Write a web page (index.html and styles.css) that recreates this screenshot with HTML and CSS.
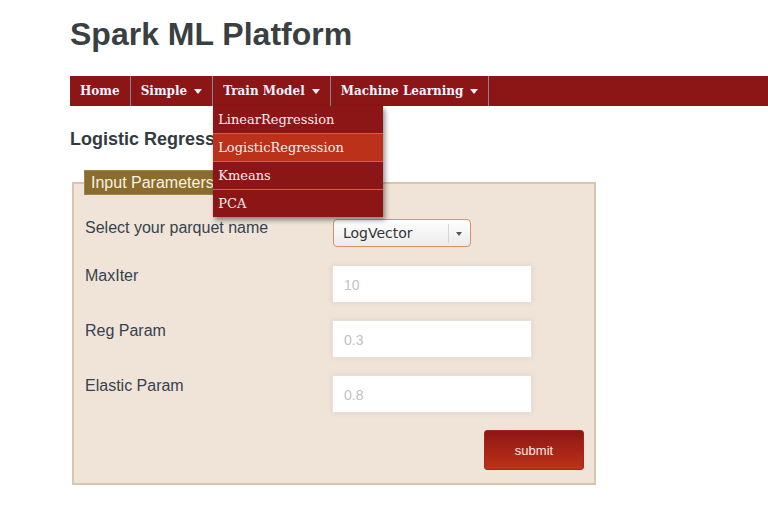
FILE: index.html
```html
<!DOCTYPE html>
<html>
<head>
<meta charset="utf-8">
<title>Spark ML Platform</title>
<link rel="stylesheet" href="styles.css">
</head>
<body>
<div class="page">
  <h1 class="title">Spark ML Platform</h1>
  <nav class="navbar">
    <ul class="menu">
      <li class="menu-item">Home</li>
      <li class="menu-item">Simple <span class="caret"></span></li>
      <li class="menu-item open">Train Model <span class="caret"></span>
        <ul class="dropdown">
          <li class="dd-item">LinearRegression</li>
          <li class="dd-item active">LogisticRegression</li>
          <li class="dd-item">Kmeans</li>
          <li class="dd-item">PCA</li>
        </ul>
      </li>
      <li class="menu-item">Machine Learning <span class="caret"></span></li>
    </ul>
  </nav>
  <h2 class="heading">Logistic Regression</h2>
  <form class="form">
    <fieldset class="params">
      <legend class="legend">Input Parameters</legend>
      <div class="row">
        <label class="label first">Select your parquet name</label>
        <div class="select">
          <span class="select-text">LogVector</span>
          <span class="select-arrow"></span>
        </div>
      </div>
      <div class="row">
        <label class="label">MaxIter</label>
        <input class="field" type="text" placeholder="10">
      </div>
      <div class="row">
        <label class="label">Reg Param</label>
        <input class="field" type="text" placeholder="0.3">
      </div>
      <div class="row">
        <label class="label">Elastic Param</label>
        <input class="field" type="text" placeholder="0.8">
      </div>
      <div class="actions">
        <button class="submit" type="button">submit</button>
      </div>
    </fieldset>
  </form>
</div>
</body>
</html>
```
FILE: styles.css
```css
html, body {
  margin: 0;
  padding: 0;
  background: #ffffff;
}
.page {
  padding-left: 70px;
  font-family: "Liberation Sans", Arial, sans-serif;
}
.title {
  margin: 15px 0 23px 0;
  font-size: 32px;
  line-height: 38px;
  font-weight: bold;
  color: #3a4042;
}
.navbar {
  background: #8c1515;
  height: 30px;
}
.menu {
  list-style: none;
  margin: 0;
  padding: 0;
  display: flex;
  height: 30px;
}
.menu-item {
  position: relative;
  font-family: "DejaVu Serif", serif;
  font-weight: bold;
  font-size: 12px;
  line-height: 30px;
  color: #f4f0ff;
  padding: 0 10px 0 10px;
  border-right: 1px solid #7d8a98;
  display: flex;
  align-items: center;
  gap: 7px;
}
.caret {
  width: 0;
  height: 0;
  border-left: 4px solid transparent;
  border-right: 4px solid transparent;
  border-top: 5px solid #f4f0ff;
}
.dropdown {
  position: absolute;
  top: 30px;
  left: 0;
  width: 170px;
  list-style: none;
  margin: 0;
  padding: 0;
  background: #8c1515;
  box-shadow: 2px 3px 5px rgba(0,0,0,0.45);
  z-index: 10;
}
.dd-item {
  font-family: "DejaVu Serif", serif;
  font-weight: normal;
  font-size: 13px;
  line-height: 27px;
  padding-left: 5px;
  color: #f6eeee;
  border-bottom: 1px solid #808080;
}
.dd-item:last-child {
  border-bottom: none;
}
.dd-item.active {
  background: #bb3119;
}
.heading {
  margin: 22px 0 20px 0;
  font-size: 18px;
  line-height: 22px;
  font-weight: bold;
  color: #333b40;
}
.form {
  margin: 0 0 0 2px;
}
.params {
  width: 524px;
  box-sizing: border-box;
  margin: 0;
  padding: 25px 10px 13px 11px;
  border: 2px solid #d8c6ab;
  background: #f0e3d8;
}
.legend {
  background: #8a6d2d;
  border: 1px solid #9f8448;
  color: #f8f2e2;
  font-size: 16px;
  line-height: 23px;
  padding: 0 6px;
  margin-left: -1px;
}
.row {
  display: flex;
  align-items: flex-start;
  margin-bottom: 17px;
}
.label {
  width: 247px;
  flex: none;
  padding-top: 1px;
  font-size: 16px;
  line-height: 20px;
  color: #35434f;
}
.label.first {
  padding-top: 0;
  margin-top: -2px;
}
.select {
  width: 138px;
  height: 28px;
  box-sizing: border-box;
  margin: -1px 0 1px 1px;
  border: 1px solid #d9906f;
  border-radius: 4px;
  background: linear-gradient(#ffffff, #ebebeb);
  display: flex;
  align-items: center;
  position: relative;
}
.select-text {
  font-family: "DejaVu Sans", sans-serif;
  font-size: 14px;
  color: #333333;
  padding-left: 9px;
  flex: 1;
}
.select-arrow {
  width: 21px;
  height: 19px;
  border-left: 1px solid #d6d6d6;
  position: relative;
}
.select-arrow::after {
  content: "";
  position: absolute;
  left: 7px;
  top: 8px;
  border-left: 3px solid transparent;
  border-right: 3px solid transparent;
  border-top: 4px solid #555555;
}
.field {
  width: 200px;
  height: 38px;
  box-sizing: border-box;
  margin: 0;
  border: 1px solid #e6e0da;
  background: #ffffff;
  box-shadow: 0 0 4px rgba(190,160,130,0.25);
  padding: 1px 11px 0 11px;
  font-family: "Liberation Sans", Arial, sans-serif;
  font-size: 14px;
  color: #333;
  outline: none;
}
.field::placeholder {
  color: #c2c2c2;
}
.actions {
  display: flex;
  justify-content: flex-end;
}
.submit {
  width: 100px;
  height: 40px;
  border: 1px solid #a3261a;
  border-radius: 3px;
  background: linear-gradient(#8e1616, #be3216);
  color: #f7eaea;
  font-family: "Liberation Sans", Arial, sans-serif;
  font-size: 13px;
  padding: 0;
}
```
